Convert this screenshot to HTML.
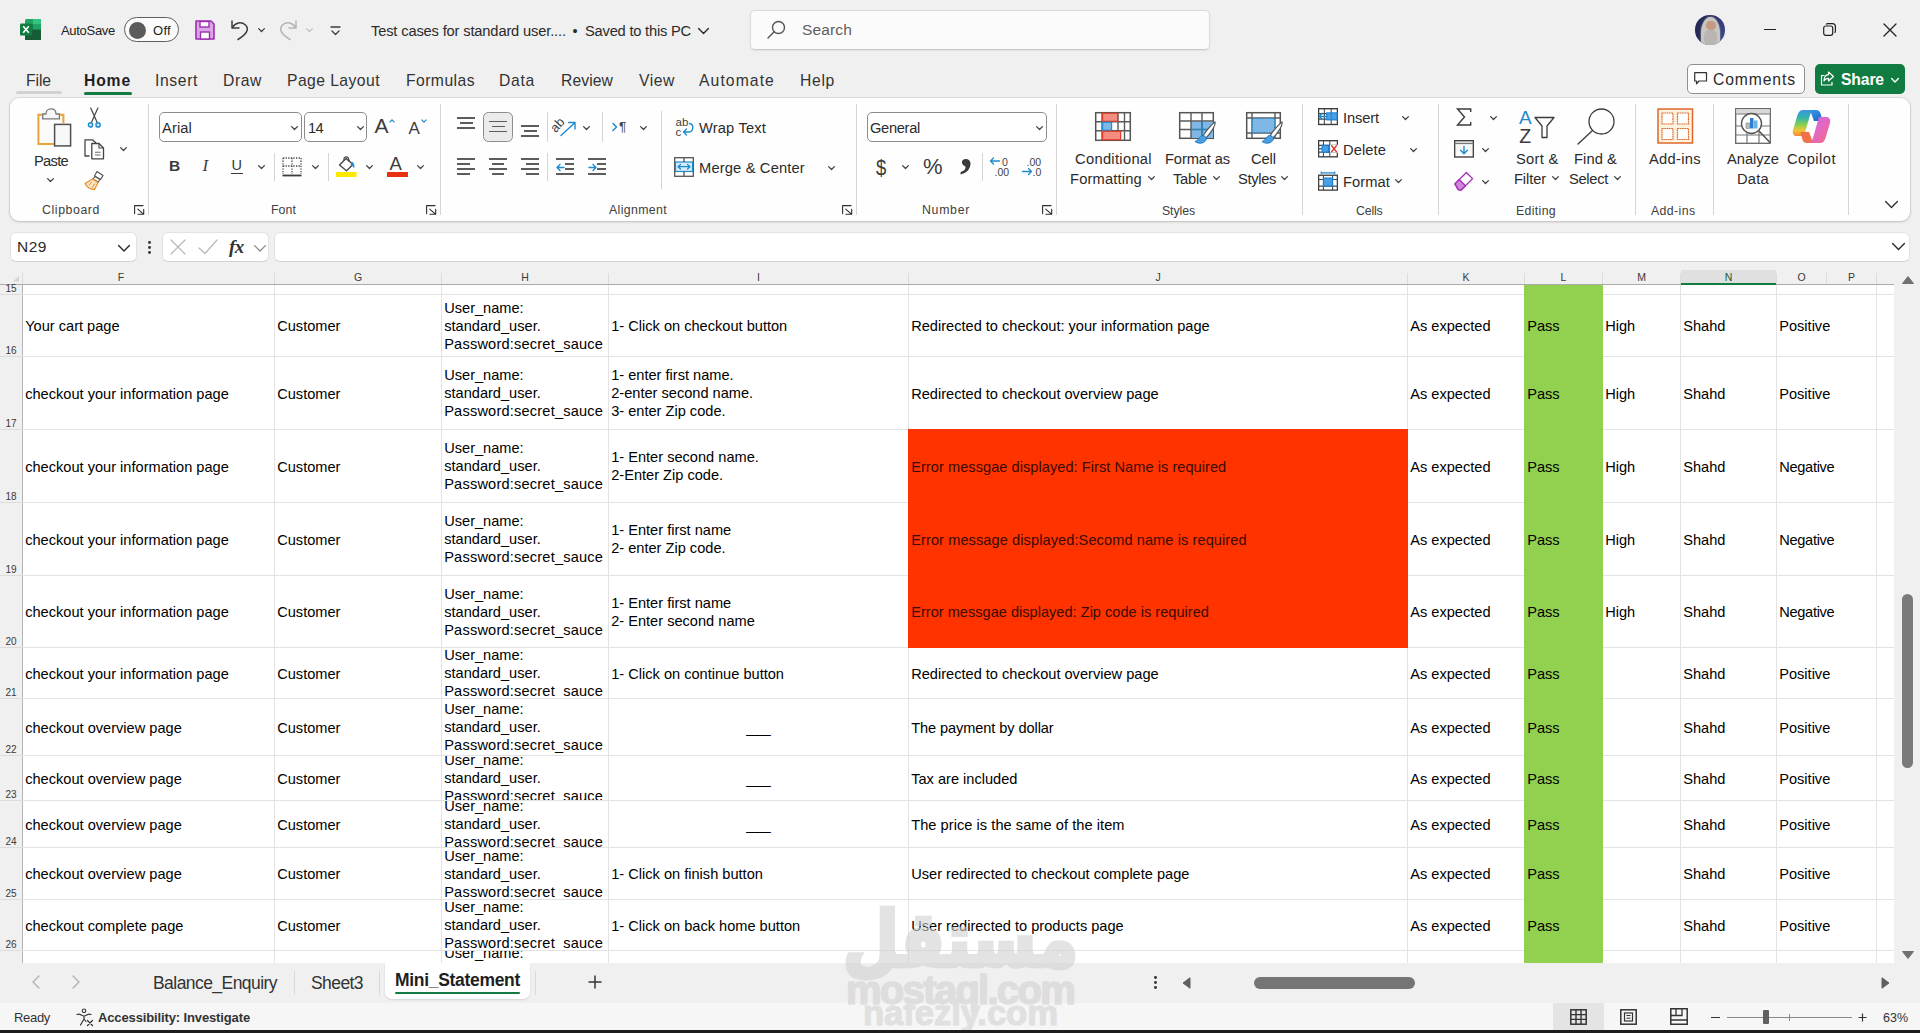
<!DOCTYPE html>
<html><head><meta charset="utf-8"><title>Excel</title>
<style>
*{box-sizing:border-box;margin:0;padding:0}
html,body{width:1920px;height:1033px;overflow:hidden}
body{background:#f0f0f0;font-family:"Liberation Sans",sans-serif;color:#222;position:relative}
.t{position:absolute;white-space:pre;display:block}
.a{position:absolute}
svg{position:absolute;overflow:visible}
#grid{position:absolute;left:0;top:285px;width:1894px;height:678px;background:#fff;overflow:hidden}
.c{position:absolute;overflow:hidden;display:flex;align-items:center;font-size:14.6px;line-height:18px;color:#000;white-space:pre;padding-left:2.2px}
.c>div{flex:none}
.hl{position:absolute;left:22px;width:1872px;height:1px;background:#e3e3e3}
.vl{position:absolute;top:0;width:1px;height:678px;background:#e3e3e3}
.rh{position:absolute;left:0;width:22px;font-size:10px;color:#3a3a3a;text-align:center;line-height:12px}
.ch{position:absolute;top:268px;height:16px;font-size:10.5px;color:#3a3a3a;text-align:center;line-height:18px}

</style></head>
<body>
<svg style="left:20px;top:19px" width="21" height="21" viewBox="0 0 21 21"><rect x="5" y="0" width="16" height="21" rx="1.5" fill="#21a366"/><rect x="13" y="0" width="8" height="5.3" fill="#33c481"/><rect x="5" y="5.3" width="8" height="5.3" fill="#107c41"/><rect x="13" y="5.3" width="8" height="5.3" fill="#21a366"/><rect x="5" y="10.6" width="16" height="10.4" fill="#185c37"/><rect x="0" y="4.5" width="12" height="12" rx="1.2" fill="#107c41"/><path d="M3.2 7.3L8.8 13.7M8.8 7.3L3.2 13.7" stroke="#fff" stroke-width="1.7"/></svg>
<span class="t " style="left:61.0px;top:20.8px;font-size:13px;line-height:20px;letter-spacing:-0.297px;">AutoSave</span>
<div class="a" style="left:124px;top:17px;width:55px;height:25px;border:1px solid #5e5e5e;border-radius:13px;background:#fbfbfb;"></div>
<div class="a" style="left:128.5px;top:21.5px;width:17px;height:17px;border-radius:50%;background:#5c5c5c;"></div>
<span class="t " style="left:153.0px;top:20.8px;font-size:13px;line-height:20px;letter-spacing:0.300px;">Off</span>
<svg style="left:195px;top:20px" width="20" height="20" viewBox="0 0 20 20"><path d="M1 1H16L19 4V19H1Z" fill="#dca6e6" stroke="#9b2fae" stroke-width="1.6" stroke-linejoin="round"/><rect x="5" y="1.5" width="9" height="5.5" fill="#fff" stroke="#9b2fae" stroke-width="1.4"/><rect x="5.5" y="12" width="9" height="7" fill="#fff" stroke="#9b2fae" stroke-width="1.4"/></svg>
<svg style="left:230px;top:19px" width="20" height="22" viewBox="0 0 20 22"><path d="M2 2V9H9" fill="none" stroke="#3b3b3b" stroke-width="1.5" stroke-linecap="round" stroke-linejoin="round"/><path d="M2.5 8.5C5 4 11 2 15.5 6C19.500 10 17 15 8 20.500" fill="none" stroke="#3b3b3b" stroke-width="1.5" stroke-linecap="round"/></svg>
<svg style="left:258.0px;top:28.2px" width="7.0" height="4.5"><path d="M0.6 0.6L3.50 3.50L6.40 0.6" fill="none" stroke="#444" stroke-width="1.3" stroke-linecap="round" stroke-linejoin="round"/></svg>
<svg style="left:278px;top:19px" width="20" height="22" viewBox="0 0 20 22"><path d="M18 2V9H11" fill="none" stroke="#b4b4b4" stroke-width="1.5" stroke-linecap="round" stroke-linejoin="round"/><path d="M17.500 8.5C15 4 9 2 4.500 6C0.500 10 3 15 12 20.500" fill="none" stroke="#b4b4b4" stroke-width="1.5" stroke-linecap="round"/></svg>
<svg style="left:306.0px;top:28.2px" width="7.0" height="4.5"><path d="M0.6 0.6L3.50 3.50L6.40 0.6" fill="none" stroke="#c0c0c0" stroke-width="1.3" stroke-linecap="round" stroke-linejoin="round"/></svg>
<svg style="left:329.5px;top:26px" width="11" height="10" viewBox="0 0 11 10"><path d="M1 1H10" stroke="#3b3b3b" stroke-width="1.3" stroke-linecap="round"/><path d="M2 5L5.500 8.500L9 5" fill="none" stroke="#3b3b3b" stroke-width="1.3" stroke-linecap="round" stroke-linejoin="round"/></svg>
<span class="t " style="left:371.0px;top:20.5px;font-size:14.7px;line-height:20px;letter-spacing:-0.162px;color:#2b2b2b;">Test cases for standard user....</span>
<span class="t " style="left:572.5px;top:20.5px;font-size:14.5px;line-height:20px;color:#2b2b2b;">•</span>
<span class="t " style="left:585.0px;top:20.5px;font-size:14.7px;line-height:20px;letter-spacing:-0.218px;color:#2b2b2b;">Saved to this PC</span>
<svg style="left:697.5px;top:27.8px" width="11.0" height="6.5"><path d="M0.6 0.6L5.50 5.50L10.40 0.6" fill="none" stroke="#2b2b2b" stroke-width="1.4" stroke-linecap="round" stroke-linejoin="round"/></svg>
<div class="a" style="left:750px;top:10px;width:460px;height:40px;background:#fbfbfb;border:1px solid #dadada;border-bottom-color:#c8c8c8;border-radius:5px;box-shadow:0 1px 2px rgba(0,0,0,.06);"></div>
<svg style="left:767px;top:20px" width="19" height="19" viewBox="0 0 19 19"><circle cx="11.500" cy="7.500" r="6" fill="none" stroke="#555" stroke-width="1.4"/><path d="M7.2 11.800L1 18" stroke="#555" stroke-width="1.4" stroke-linecap="round"/></svg>
<span class="t " style="left:802.0px;top:19.5px;font-size:15.5px;line-height:20px;letter-spacing:0.148px;color:#5f5f5f;">Search</span>
<div class="a" style="left:1695px;top:15px;width:29.5px;height:29.5px;border-radius:50%;background:linear-gradient(100deg,#23264f 0,#2c3166 55%,#3c4c8e 100%);overflow:hidden"><div class="a" style="left:6px;top:2px;width:19px;height:34px;border-radius:50% 50% 35% 35%;background:#c9c5c1;box-shadow:0 0 2px #c9c5c1"></div><div class="a" style="left:11px;top:6px;width:9.5px;height:9px;border-radius:45%;background:#c49a84"></div><div class="a" style="left:9px;top:15px;width:13px;height:16px;border-radius:40%;background:#b9b5b2"></div></div>
<div class="a" style="left:1764px;top:29px;width:12px;height:1.3px;background:#222;"></div>
<svg style="left:1823px;top:23px" width="13" height="13" viewBox="0 0 13 13"><rect x="0.700" y="3" width="9" height="9.300" rx="2" fill="none" stroke="#222" stroke-width="1.2"/><path d="M3.200 1.500C3.500 0.800 4.200 0.600 5 0.600H9.500C11.300 0.600 12.400 1.700 12.400 3.500V8C12.400 8.800 12.100 9.500 11.500 9.800" fill="none" stroke="#222" stroke-width="1.2"/></svg>
<svg style="left:1883px;top:23px" width="14" height="14" viewBox="0 0 14 14"><path d="M1 1L13 13M13 1L1 13" stroke="#222" stroke-width="1.3" stroke-linecap="round"/></svg>
<span class="t " style="left:26.0px;top:71.0px;font-size:15.7px;line-height:20px;letter-spacing:-0.075px;color:#333;">File</span>
<span class="t " style="left:84.0px;top:71.0px;font-size:15.7px;line-height:20px;letter-spacing:0.845px;font-weight:bold;color:#1f1f1f;">Home</span>
<span class="t " style="left:155.0px;top:71.0px;font-size:15.7px;line-height:20px;letter-spacing:0.622px;color:#333;">Insert</span>
<span class="t " style="left:223.0px;top:71.0px;font-size:15.7px;line-height:20px;letter-spacing:0.591px;color:#333;">Draw</span>
<span class="t " style="left:287.0px;top:71.0px;font-size:15.7px;line-height:20px;letter-spacing:0.439px;color:#333;">Page Layout</span>
<span class="t " style="left:406.0px;top:71.0px;font-size:15.7px;line-height:20px;letter-spacing:0.446px;color:#333;">Formulas</span>
<span class="t " style="left:499.0px;top:71.0px;font-size:15.7px;line-height:20px;letter-spacing:0.709px;color:#333;">Data</span>
<span class="t " style="left:561.0px;top:71.0px;font-size:15.7px;line-height:20px;letter-spacing:0.087px;color:#333;">Review</span>
<span class="t " style="left:639.0px;top:71.0px;font-size:15.7px;line-height:20px;letter-spacing:0.563px;color:#333;">View</span>
<span class="t " style="left:699.0px;top:71.0px;font-size:15.7px;line-height:20px;letter-spacing:1.100px;color:#333;">Automate</span>
<span class="t " style="left:800.0px;top:71.0px;font-size:15.7px;line-height:20px;letter-spacing:0.677px;color:#333;">Help</span>
<div class="a" style="left:16px;top:91px;width:46px;height:2.5px;background:#d2d2d2;border-radius:2px;"></div>
<div class="a" style="left:84px;top:91.5px;width:48px;height:3px;background:#107c41;border-radius:2px;"></div>
<div class="a" style="left:1687px;top:64px;width:118px;height:30px;background:#fdfdfd;border:1px solid #8f8f8f;border-radius:5px;"></div>
<svg style="left:1693px;top:71px" width="16" height="16" viewBox="0 0 16 16"><path d="M1.700 1.700H13.500V10H6L3.500 12.800V10H1.700Z" fill="none" stroke="#333" stroke-width="1.2" stroke-linejoin="round"/></svg>
<span class="t " style="left:1713.0px;top:70.0px;font-size:15.7px;line-height:20px;letter-spacing:0.887px;color:#2b2b2b;">Comments</span>
<div class="a" style="left:1815px;top:64px;width:90px;height:30px;background:#107c41;border-radius:5px;"></div>
<svg style="left:1819px;top:70px" width="16" height="17" viewBox="0 0 16 17"><path d="M5.500 5.500H2.500V15H13V12" fill="none" stroke="#fff" stroke-width="1.200" stroke-linejoin="round"/><path d="M9.500 2L14.500 6.500L9.500 11V8.300C7 8.300 5.700 9.500 5 11C5 7.500 6.500 5 9.500 4.700Z" fill="none" stroke="#fff" stroke-width="1.200" stroke-linejoin="round"/></svg>
<span class="t " style="left:1841.0px;top:69.8px;font-size:15.7px;line-height:20px;letter-spacing:-0.127px;font-weight:bold;color:#fff;">Share</span>
<svg style="left:1891.0px;top:77.5px" width="8.0" height="5.0"><path d="M0.6 0.6L4.00 4.00L7.40 0.6" fill="none" stroke="#fff" stroke-width="1.4" stroke-linecap="round" stroke-linejoin="round"/></svg>
<div class="a" style="left:10px;top:98px;width:1900px;height:123px;background:#fefefe;border-radius:9px;box-shadow:0 1px 3px rgba(0,0,0,.16),0 0 0 1px rgba(0,0,0,.07);"></div>
<div class="a" style="left:148px;top:104px;width:1px;height:111px;background:#d4d4d4;"></div>
<div class="a" style="left:440px;top:104px;width:1px;height:111px;background:#d4d4d4;"></div>
<div class="a" style="left:856px;top:104px;width:1px;height:111px;background:#d4d4d4;"></div>
<div class="a" style="left:1056px;top:104px;width:1px;height:111px;background:#d4d4d4;"></div>
<div class="a" style="left:1302px;top:104px;width:1px;height:111px;background:#d4d4d4;"></div>
<div class="a" style="left:1438px;top:104px;width:1px;height:111px;background:#d4d4d4;"></div>
<div class="a" style="left:1635px;top:104px;width:1px;height:111px;background:#d4d4d4;"></div>
<div class="a" style="left:1713px;top:104px;width:1px;height:111px;background:#d4d4d4;"></div>
<div class="a" style="left:1848px;top:104px;width:1px;height:111px;background:#d4d4d4;"></div>
<span class="t " style="left:42.0px;top:199.5px;font-size:12.3px;line-height:20px;letter-spacing:0.594px;color:#404040;">Clipboard</span>
<span class="t " style="left:271.0px;top:199.5px;font-size:12.3px;line-height:20px;letter-spacing:0.097px;color:#404040;">Font</span>
<span class="t " style="left:609.0px;top:199.5px;font-size:12.3px;line-height:20px;letter-spacing:0.367px;color:#404040;">Alignment</span>
<span class="t " style="left:922.0px;top:199.5px;font-size:12.3px;line-height:20px;letter-spacing:0.709px;color:#404040;">Number</span>
<span class="t " style="left:1162.0px;top:200.5px;font-size:12.3px;line-height:20px;letter-spacing:-0.083px;color:#404040;">Styles</span>
<span class="t " style="left:1356.0px;top:200.5px;font-size:12.3px;line-height:20px;letter-spacing:-0.168px;color:#404040;">Cells</span>
<span class="t " style="left:1516.0px;top:200.5px;font-size:12.3px;line-height:20px;letter-spacing:0.341px;color:#404040;">Editing</span>
<span class="t " style="left:1651.0px;top:200.5px;font-size:12.3px;line-height:20px;letter-spacing:0.399px;color:#404040;">Add-ins</span>
<svg style="left:134px;top:205px" width="11" height="11" viewBox="0 0 11 11"><path d="M0.600 8.600V0.600H9M3.800 4.100L9.500 9.200M4 9.300H9.700V4.300" fill="none" stroke="#2e2e2e" stroke-width="1.100" stroke-linecap="round" stroke-linejoin="round"/></svg>
<svg style="left:426px;top:205px" width="11" height="11" viewBox="0 0 11 11"><path d="M0.600 8.600V0.600H9M3.800 4.100L9.500 9.200M4 9.300H9.700V4.300" fill="none" stroke="#2e2e2e" stroke-width="1.100" stroke-linecap="round" stroke-linejoin="round"/></svg>
<svg style="left:842px;top:205px" width="11" height="11" viewBox="0 0 11 11"><path d="M0.600 8.600V0.600H9M3.800 4.100L9.500 9.200M4 9.300H9.700V4.300" fill="none" stroke="#2e2e2e" stroke-width="1.100" stroke-linecap="round" stroke-linejoin="round"/></svg>
<svg style="left:1042px;top:205px" width="11" height="11" viewBox="0 0 11 11"><path d="M0.600 8.600V0.600H9M3.800 4.100L9.500 9.200M4 9.300H9.700V4.300" fill="none" stroke="#2e2e2e" stroke-width="1.100" stroke-linecap="round" stroke-linejoin="round"/></svg>
<svg style="left:33.5px;top:107.5px" width="38" height="40" viewBox="0 0 38 40"><path d="M20 36H4.400V6.800H29.400V15" fill="#fafafa" stroke="#e8a33d" stroke-width="2" stroke-linejoin="miter"/><path d="M8.700 10.900V6H12C12 3 14 0.900 17 0.900C20 0.900 22 3 22 6H25.400V10.900Z" fill="#f6f6f6" stroke="#7a7a7a" stroke-width="1.300" stroke-linejoin="round"/><rect x="20.600" y="16.400" width="16" height="21.500" fill="#f8f8f8" stroke="#4f4f4f" stroke-width="1.500"/></svg>
<span class="t " style="left:34.0px;top:151.0px;font-size:14.7px;line-height:20px;letter-spacing:-0.718px;color:#2b2b2b;">Paste</span>
<svg style="left:47.0px;top:177.8px" width="7.0" height="4.5"><path d="M0.6 0.6L3.50 3.50L6.40 0.6" fill="none" stroke="#444" stroke-width="1.3" stroke-linecap="round" stroke-linejoin="round"/></svg>
<svg style="left:86.5px;top:106.5px" width="15" height="22" viewBox="0 0 15 22"><path d="M3.700 1L10.300 15.800M10.900 1L4.300 15.800" fill="none" stroke="#444" stroke-width="1.200" stroke-linecap="round"/><circle cx="3.500" cy="17.900" r="2.100" fill="#cfe6f7" stroke="#1e8bcd" stroke-width="1.400"/><circle cx="11.100" cy="17.900" r="2.100" fill="#cfe6f7" stroke="#1e8bcd" stroke-width="1.400"/></svg>
<svg style="left:84px;top:139px" width="21" height="21" viewBox="0 0 21 21"><path d="M5.500 17H1V0.800H8.500L12 4" fill="none" stroke="#444" stroke-width="1.300" stroke-linejoin="round"/><path d="M7.800 4.500H15L19.500 9V19.800H7.800Z" fill="#fff" stroke="#444" stroke-width="1.300" stroke-linejoin="round"/><path d="M15 4.500V9H19.500" fill="none" stroke="#444" stroke-width="1.100"/><path d="M11 13.300H16.500M11 16H16.500" stroke="#666" stroke-width="1.100"/></svg>
<svg style="left:120.0px;top:147.2px" width="7.0" height="4.5"><path d="M0.6 0.6L3.50 3.50L6.40 0.6" fill="none" stroke="#444" stroke-width="1.3" stroke-linecap="round" stroke-linejoin="round"/></svg>
<svg style="left:84px;top:170px" width="21" height="21" viewBox="0 0 21 21"><path d="M13 1.500L19 5.500L16.500 9.500L10.500 6Z" fill="#fff" stroke="#555" stroke-width="1.200" stroke-linejoin="round"/><path d="M11 6.500L16 9.500L14 12L9 9Z" fill="#fff" stroke="#555" stroke-width="1.100"/><path d="M8.500 9L1 13.500C3 17 7 19.500 10.500 19.500L14 12.500Z" fill="#fbe3c4" stroke="#e8912d" stroke-width="1.300" stroke-linejoin="round"/><path d="M5 15L8 12M8 17.500L11 13.500" stroke="#e8912d" stroke-width="1"/></svg>
<div class="a" style="left:159px;top:112px;width:143px;height:30px;background:#fff;border:1px solid #8d8d8d;border-radius:5px;"></div>
<span class="t " style="left:162.0px;top:117.5px;font-size:14.7px;line-height:20px;letter-spacing:0.118px;color:#2b2b2b;">Arial</span>
<svg style="left:290.5px;top:125.8px" width="7.0" height="4.5"><path d="M0.6 0.6L3.50 3.50L6.40 0.6" fill="none" stroke="#444" stroke-width="1.3" stroke-linecap="round" stroke-linejoin="round"/></svg>
<div class="a" style="left:304px;top:112px;width:62.8px;height:30px;background:#fff;border:1px solid #8d8d8d;border-radius:5px;"></div>
<span class="t " style="left:308.0px;top:117.5px;font-size:14.7px;line-height:20px;letter-spacing:-0.676px;color:#2b2b2b;">14</span>
<svg style="left:356.5px;top:125.8px" width="7.0" height="4.5"><path d="M0.6 0.6L3.50 3.50L6.40 0.6" fill="none" stroke="#444" stroke-width="1.3" stroke-linecap="round" stroke-linejoin="round"/></svg>
<span class="t " style="left:374.5px;top:115.5px;font-size:21px;line-height:20px;color:#3b3b3b;">A</span>
<svg style="left:389px;top:118.5px" width="6" height="4" viewBox="0 0 6 4"><path d="M0.600 3.400L3 0.800L5.400 3.400" fill="none" stroke="#1e8bcd" stroke-width="1.200"/></svg>
<span class="t " style="left:408.5px;top:118.5px;font-size:17px;line-height:20px;color:#3b3b3b;">A</span>
<svg style="left:420.5px;top:119px" width="6" height="4" viewBox="0 0 6 4"><path d="M0.600 0.600L3 3.200L5.400 0.600" fill="none" stroke="#1e8bcd" stroke-width="1.200"/></svg>
<span class="t " style="left:169.0px;top:155.5px;font-size:15.5px;line-height:20px;font-weight:bold;color:#3b3b3b;">B</span>
<span class="t" style="left:202.500px;top:156px;font-size:17px;line-height:20px;font-family:'Liberation Serif',serif;font-style:italic;color:#3b3b3b">I</span>
<span class="t " style="left:231.5px;top:154.5px;font-size:14.5px;line-height:20px;color:#3b3b3b;">U</span>
<div class="a" style="left:230.5px;top:173.2px;width:12.5px;height:1.3px;background:#3b3b3b;"></div>
<svg style="left:258.0px;top:165.2px" width="7.0" height="4.5"><path d="M0.6 0.6L3.50 3.50L6.40 0.6" fill="none" stroke="#444" stroke-width="1.3" stroke-linecap="round" stroke-linejoin="round"/></svg>
<div class="a" style="left:274px;top:153px;width:1px;height:28px;background:#d4d4d4;"></div>
<svg style="left:282px;top:157px" width="20" height="20" viewBox="0 0 20 20"><path d="M1 1H19M1 1V17M19 1V17M10 1V17M1 9H19" fill="none" stroke="#4a4a4a" stroke-width="1.300" stroke-dasharray="1.300 1.300"/><path d="M0.500 18.500H19.500" stroke="#3b3b3b" stroke-width="1.800"/></svg>
<svg style="left:312.0px;top:165.2px" width="7.0" height="4.5"><path d="M0.6 0.6L3.50 3.50L6.40 0.6" fill="none" stroke="#444" stroke-width="1.3" stroke-linecap="round" stroke-linejoin="round"/></svg>
<div class="a" style="left:328px;top:153px;width:1px;height:28px;background:#d4d4d4;"></div>
<svg style="left:336px;top:156px" width="21" height="22" viewBox="0 0 21 22"><path d="M10 2.500L17 8.500L10.500 14.800L3.500 9Z" fill="#fff" stroke="#444" stroke-width="1.300" stroke-linejoin="round"/><path d="M8 5V2.500C8 1 10.500 0.500 12 1.500L13.500 5.500" fill="none" stroke="#444" stroke-width="1.200"/><path d="M15.500 5.500C18 6.500 19 9.500 18.200 12.500C17 10.500 16.500 9.500 14.500 9.500Z" fill="#1e8bcd"/><rect x="0" y="16" width="20.500" height="5" fill="#ffe800"/></svg>
<svg style="left:366.0px;top:165.2px" width="7.0" height="4.5"><path d="M0.6 0.6L3.50 3.50L6.40 0.6" fill="none" stroke="#444" stroke-width="1.3" stroke-linecap="round" stroke-linejoin="round"/></svg>
<span class="t " style="left:389.5px;top:154.0px;font-size:18.5px;line-height:20px;color:#3b3b3b;">A</span>
<div class="a" style="left:387px;top:172px;width:20.5px;height:5px;background:#e8310f;"></div>
<svg style="left:417.0px;top:165.2px" width="7.0" height="4.5"><path d="M0.6 0.6L3.50 3.50L6.40 0.6" fill="none" stroke="#444" stroke-width="1.3" stroke-linecap="round" stroke-linejoin="round"/></svg>
<div class="a" style="left:457px;top:117.3px;width:18px;height:1.6px;background:#5c5c5c;"></div>
<div class="a" style="left:459.5px;top:122.3px;width:13.0px;height:1.6px;background:#5c5c5c;"></div>
<div class="a" style="left:457px;top:127.3px;width:18px;height:1.6px;background:#5c5c5c;"></div>
<div class="a" style="left:483px;top:112px;width:29.8px;height:30px;background:#ebebeb;border:1px solid #8d8d8d;border-radius:5.500px;"></div>
<div class="a" style="left:489px;top:120.5px;width:18px;height:1.6px;background:#5c5c5c;"></div>
<div class="a" style="left:491.5px;top:125.5px;width:13.0px;height:1.6px;background:#5c5c5c;"></div>
<div class="a" style="left:489px;top:130.5px;width:18px;height:1.6px;background:#5c5c5c;"></div>
<div class="a" style="left:521px;top:125.4px;width:18px;height:1.6px;background:#5c5c5c;"></div>
<div class="a" style="left:523.5px;top:130.39999999999998px;width:13.0px;height:1.6px;background:#5c5c5c;"></div>
<div class="a" style="left:521px;top:135.39999999999998px;width:18px;height:1.6px;background:#5c5c5c;"></div>
<div class="a" style="left:547px;top:112px;width:1px;height:30px;background:#d4d4d4;"></div>
<svg style="left:553px;top:116px" width="24" height="22" viewBox="0 0 24 22"><text x="0" y="13" font-size="13" font-family="Liberation Sans,sans-serif" fill="#3f3f3f" transform="rotate(-48 6 12)">ab</text><path d="M8 19.500L21.500 7M15.500 6.500H22V13" fill="none" stroke="#1e8bcd" stroke-width="1.400" stroke-linecap="round" stroke-linejoin="round"/></svg>
<svg style="left:582.5px;top:125.8px" width="7.0" height="4.5"><path d="M0.6 0.6L3.50 3.50L6.40 0.6" fill="none" stroke="#444" stroke-width="1.3" stroke-linecap="round" stroke-linejoin="round"/></svg>
<div class="a" style="left:602px;top:112px;width:1px;height:30px;background:#d4d4d4;"></div>
<svg style="left:612px;top:120px" width="8" height="14" viewBox="0 0 8 14"><path d="M1 3.500L4.500 7L1 10.500" fill="none" stroke="#1e8bcd" stroke-width="1.500" stroke-linecap="round" stroke-linejoin="round"/></svg>
<span class="t " style="left:619.0px;top:117.0px;font-size:13.5px;line-height:20px;color:#444;">¶</span>
<svg style="left:639.5px;top:125.8px" width="7.0" height="4.5"><path d="M0.6 0.6L3.50 3.50L6.40 0.6" fill="none" stroke="#444" stroke-width="1.3" stroke-linecap="round" stroke-linejoin="round"/></svg>
<div class="a" style="left:661px;top:111px;width:1px;height:78px;background:#d4d4d4;"></div>
<svg style="left:675px;top:117px" width="20" height="20" viewBox="0 0 20 20"><text x="0.500" y="8.500" font-size="11.500" font-family="Liberation Sans,sans-serif" fill="#3f3f3f">ab</text><text x="0.500" y="18.500" font-size="11.500" font-family="Liberation Sans,sans-serif" fill="#3f3f3f">c</text><path d="M14.500 6.500C19 7 19 15 13.500 15H9M11.500 12L8.500 15L11.500 18" fill="none" stroke="#1e8bcd" stroke-width="1.400" stroke-linecap="round" stroke-linejoin="round"/></svg>
<span class="t " style="left:699.0px;top:117.5px;font-size:14.7px;line-height:20px;letter-spacing:0.152px;color:#2b2b2b;">Wrap Text</span>
<div class="a" style="left:457px;top:158.1px;width:18px;height:1.6px;background:#5c5c5c;"></div>
<div class="a" style="left:457px;top:163.2px;width:13px;height:1.6px;background:#5c5c5c;"></div>
<div class="a" style="left:457px;top:168.29999999999998px;width:18px;height:1.6px;background:#5c5c5c;"></div>
<div class="a" style="left:457px;top:173.39999999999998px;width:13px;height:1.6px;background:#5c5c5c;"></div>
<div class="a" style="left:489px;top:158.1px;width:18px;height:1.6px;background:#5c5c5c;"></div>
<div class="a" style="left:492px;top:163.2px;width:12px;height:1.6px;background:#5c5c5c;"></div>
<div class="a" style="left:489px;top:168.29999999999998px;width:18px;height:1.6px;background:#5c5c5c;"></div>
<div class="a" style="left:492px;top:173.39999999999998px;width:12px;height:1.6px;background:#5c5c5c;"></div>
<div class="a" style="left:521px;top:158.1px;width:18px;height:1.6px;background:#5c5c5c;"></div>
<div class="a" style="left:526px;top:163.2px;width:13px;height:1.6px;background:#5c5c5c;"></div>
<div class="a" style="left:521px;top:168.29999999999998px;width:18px;height:1.6px;background:#5c5c5c;"></div>
<div class="a" style="left:526px;top:173.39999999999998px;width:13px;height:1.6px;background:#5c5c5c;"></div>
<div class="a" style="left:547px;top:153px;width:1px;height:28px;background:#d4d4d4;"></div>
<div class="a" style="left:556px;top:158.1px;width:18px;height:1.6px;background:#5c5c5c;"></div>
<div class="a" style="left:565px;top:163.2px;width:9px;height:1.6px;background:#5c5c5c;"></div>
<div class="a" style="left:565px;top:168.29999999999998px;width:9px;height:1.6px;background:#5c5c5c;"></div>
<div class="a" style="left:556px;top:173.39999999999998px;width:18px;height:1.6px;background:#5c5c5c;"></div>
<svg style="left:556px;top:162.5px" width="9" height="9" viewBox="0 0 9 9"><path d="M8 4.500H1M4 1.500L1 4.500L4 7.500" fill="none" stroke="#1e8bcd" stroke-width="1.400" stroke-linecap="round" stroke-linejoin="round"/></svg>
<div class="a" style="left:588px;top:158.1px;width:18px;height:1.6px;background:#5c5c5c;"></div>
<div class="a" style="left:597px;top:163.2px;width:9px;height:1.6px;background:#5c5c5c;"></div>
<div class="a" style="left:597px;top:168.29999999999998px;width:9px;height:1.6px;background:#5c5c5c;"></div>
<div class="a" style="left:588px;top:173.39999999999998px;width:18px;height:1.6px;background:#5c5c5c;"></div>
<svg style="left:588px;top:162.5px" width="9" height="9" viewBox="0 0 9 9"><path d="M1 4.500H8M5 1.500L8 4.500L5 7.500" fill="none" stroke="#1e8bcd" stroke-width="1.400" stroke-linecap="round" stroke-linejoin="round"/></svg>
<svg style="left:674px;top:157px" width="20" height="20" viewBox="0 0 20 20"><rect x="0.700" y="0.700" width="18.600" height="18.600" fill="#fff" stroke="#555" stroke-width="1.300"/><rect x="1.500" y="5" width="17" height="9.500" fill="#d6ecfa" stroke="#1e8bcd" stroke-width="1.200"/><path d="M10 0.700V5M10 14.500V19.300" stroke="#555" stroke-width="1.300"/><path d="M4 9.700H16M6.500 7.500L4 9.700L6.500 12M13.500 7.500L16 9.700L13.500 12" fill="none" stroke="#1e8bcd" stroke-width="1.200" stroke-linecap="round" stroke-linejoin="round"/></svg>
<span class="t " style="left:699.0px;top:157.5px;font-size:14.7px;line-height:20px;letter-spacing:0.160px;color:#2b2b2b;">Merge &amp; Center</span>
<svg style="left:827.5px;top:165.8px" width="7.0" height="4.5"><path d="M0.6 0.6L3.50 3.50L6.40 0.6" fill="none" stroke="#444" stroke-width="1.3" stroke-linecap="round" stroke-linejoin="round"/></svg>
<div class="a" style="left:867px;top:112px;width:180px;height:30px;background:#fff;border:1px solid #8d8d8d;border-radius:5px;"></div>
<span class="t " style="left:870.0px;top:117.5px;font-size:14.7px;line-height:20px;letter-spacing:-0.328px;color:#2b2b2b;">General</span>
<svg style="left:1035.5px;top:125.8px" width="7.0" height="4.5"><path d="M0.6 0.6L3.50 3.50L6.40 0.6" fill="none" stroke="#444" stroke-width="1.3" stroke-linecap="round" stroke-linejoin="round"/></svg>
<span class="t " style="left:876.0px;top:157.0px;font-size:21px;line-height:20px;color:#3b3b3b;transform:scale(.88,1.08);transform-origin:0 50%;">$</span>
<svg style="left:901.5px;top:165.2px" width="7.0" height="4.5"><path d="M0.6 0.6L3.50 3.50L6.40 0.6" fill="none" stroke="#444" stroke-width="1.3" stroke-linecap="round" stroke-linejoin="round"/></svg>
<span class="t " style="left:923.0px;top:157.0px;font-size:22px;line-height:20px;color:#3b3b3b;">%</span>
<span class="t" style="left:957.500px;top:150.300px;font-size:50px;line-height:50px;font-weight:bold;font-family:'Liberation Serif',serif;color:#3b3b3b">’</span>
<div class="a" style="left:982px;top:153px;width:1px;height:28px;background:#d4d4d4;"></div>
<svg style="left:989px;top:156px" width="22" height="22" viewBox="0 0 22 22"><path d="M10.500 5H1.500M4.500 2L1.500 5L4.500 8" fill="none" stroke="#1e8bcd" stroke-width="1.300" stroke-linecap="round" stroke-linejoin="round"/><text x="13" y="9.500" font-size="10.500" font-family="Liberation Sans,sans-serif" fill="#444">0</text><text x="5.500" y="20" font-size="10.500" font-family="Liberation Sans,sans-serif" fill="#444">.00</text></svg>
<svg style="left:1021px;top:156px" width="22" height="22" viewBox="0 0 22 22"><text x="5.500" y="9.500" font-size="10.500" font-family="Liberation Sans,sans-serif" fill="#444">.00</text><path d="M1.500 15.500H10.500M7.500 12.500L10.500 15.500L7.500 18.500" fill="none" stroke="#1e8bcd" stroke-width="1.300" stroke-linecap="round" stroke-linejoin="round"/><text x="11.500" y="20" font-size="10.500" font-family="Liberation Sans,sans-serif" fill="#444">.0</text></svg>
<svg style="left:1095px;top:112px" width="36" height="29" viewBox="0 0 36 29"><rect x="0.700" y="0.700" width="34.600" height="27.600" fill="#fff" stroke="#555" stroke-width="1.500"/><path d="M0.700 9.700H35.300M0.700 18.700H35.300M7 0.700V28.300M23 0.700V28.300M29.500 0.700V28.300" stroke="#5a5a5a" stroke-width="1.400"/><rect x="7.600" y="1.300" width="15" height="8" fill="#f28d80" stroke="#e23d2c" stroke-width="1.200"/><rect x="7.600" y="10.300" width="9" height="8" fill="#7fb8e6" stroke="#1e8bcd" stroke-width="1.200"/><rect x="7.600" y="19.300" width="18" height="8.400" fill="#f28d80" stroke="#e23d2c" stroke-width="1.200"/></svg>
<span class="t " style="left:1075.0px;top:149.0px;font-size:14.7px;line-height:20px;letter-spacing:0.313px;color:#2b2b2b;">Conditional</span>
<span class="t " style="left:1070.0px;top:169.0px;font-size:14.7px;line-height:20px;letter-spacing:0.174px;color:#2b2b2b;">Formatting</span>
<svg style="left:1147.8px;top:176.1px" width="7.0" height="4.5"><path d="M0.6 0.6L3.50 3.50L6.40 0.6" fill="none" stroke="#444" stroke-width="1.3" stroke-linecap="round" stroke-linejoin="round"/></svg>
<svg style="left:1179px;top:112px" width="38" height="34" viewBox="0 0 38 34"><rect x="0.700" y="0.700" width="33.600" height="25.600" fill="#fff" stroke="#555" stroke-width="1.500"/><rect x="12" y="9.500" width="22" height="16.500" fill="#7fb8e6"/><path d="M0.700 9H34.300M0.700 17.500H34.300M12 0.700V26.300M23 0.700V26.300" stroke="#5a5a5a" stroke-width="1.400"/><path d="M12 17.500H34M23 9V26" stroke="#1e8bcd" stroke-width="1.200"/><path d="M36 10C34 11 26 20 24 24L27 26C30 23 37 14 36 10Z" fill="#fff" stroke="#555" stroke-width="1.200"/><path d="M23.5 23.5C20 24 20.5 28 16 29.5C20 32.5 26.5 31.5 27.5 26.5C27 25 25.5 23.5 23.5 23.5Z" fill="#4a9fe0" stroke="#1e78c8" stroke-width="1"/></svg>
<span class="t " style="left:1165.0px;top:149.0px;font-size:14.7px;line-height:20px;letter-spacing:-0.130px;color:#2b2b2b;">Format as</span>
<span class="t " style="left:1173.0px;top:169.0px;font-size:14.7px;line-height:20px;letter-spacing:-0.229px;color:#2b2b2b;">Table</span>
<svg style="left:1212.5px;top:176.1px" width="7.0" height="4.5"><path d="M0.6 0.6L3.50 3.50L6.40 0.6" fill="none" stroke="#444" stroke-width="1.3" stroke-linecap="round" stroke-linejoin="round"/></svg>
<svg style="left:1246px;top:112px" width="38" height="34" viewBox="0 0 38 34"><rect x="0.700" y="0.700" width="33.600" height="25.600" fill="#fff" stroke="#555" stroke-width="1.500"/><path d="M0.700 6H34.300M0.700 21H34.300M6 0.700V26.300M29 0.700V26.300" stroke="#5a5a5a" stroke-width="1.400"/><rect x="6.500" y="6.500" width="22" height="14" fill="#7fb8e6" stroke="#1e8bcd" stroke-width="1.200" stroke-dasharray="1.500 1"/><path d="M36 10C34 11 26 20 24 24L27 26C30 23 37 14 36 10Z" fill="#fff" stroke="#555" stroke-width="1.200"/><path d="M23.5 23.5C20 24 20.5 28 16 29.5C20 32.5 26.5 31.5 27.5 26.5C27 25 25.5 23.5 23.5 23.5Z" fill="#4a9fe0" stroke="#1e78c8" stroke-width="1"/></svg>
<span class="t " style="left:1251.0px;top:149.0px;font-size:14.7px;line-height:20px;letter-spacing:-0.081px;color:#2b2b2b;">Cell</span>
<span class="t " style="left:1238.0px;top:169.0px;font-size:14.7px;line-height:20px;letter-spacing:-0.339px;color:#2b2b2b;">Styles</span>
<svg style="left:1280.5px;top:176.1px" width="7.0" height="4.5"><path d="M0.6 0.6L3.50 3.50L6.40 0.6" fill="none" stroke="#444" stroke-width="1.3" stroke-linecap="round" stroke-linejoin="round"/></svg>
<svg style="left:1318px;top:108.3px" width="20" height="17.2" viewBox="0 0 22 17" preserveAspectRatio="none"><rect x="0.700" y="0.700" width="20.600" height="15.600" fill="#fff" stroke="#3f3f3f" stroke-width="1.400"/><path d="M0.700 5.500H21.300M0.700 11H21.300M7 0.700V16.300M14.500 0.700V16.300" stroke="#4a4a4a" stroke-width="1.200"/><rect x="9.500" y="4.800" width="11.500" height="7" fill="#4aa0e6" stroke="#1a7fd0" stroke-width="1"/><path d="M14.500 5V11.500" stroke="#1a7fd0" stroke-width="1"/><path d="M10 8.300H1.500M4.500 5.300L1.500 8.300L4.500 11.300" fill="none" stroke="#1e8bcd" stroke-width="1.500" stroke-linecap="round" stroke-linejoin="round"/></svg>
<span class="t " style="left:1343.0px;top:107.5px;font-size:14.7px;line-height:20px;letter-spacing:-0.127px;color:#2b2b2b;">Insert</span>
<svg style="left:1401.5px;top:115.8px" width="7.0" height="4.5"><path d="M0.6 0.6L3.50 3.50L6.40 0.6" fill="none" stroke="#444" stroke-width="1.3" stroke-linecap="round" stroke-linejoin="round"/></svg>
<svg style="left:1318px;top:140.1px" width="20" height="17.5" viewBox="0 0 22 18" preserveAspectRatio="none"><rect x="0.700" y="0.700" width="20.600" height="16.600" fill="#fff" stroke="#3f3f3f" stroke-width="1.400"/><path d="M0.700 5.500H21.300M0.700 12.500H21.300M6 0.700V17.300M13 0.700V17.300" stroke="#4a4a4a" stroke-width="1.200"/><rect x="13.200" y="5" width="8.800" height="8" fill="#fff"/><rect x="4.500" y="5.500" width="7" height="7" fill="#4aa0e6" stroke="#1a7fd0" stroke-width="1.200"/><path d="M1 9H4.500M11.500 9H13.500" stroke="#1a7fd0" stroke-width="1.300"/><path d="M15 6L20.300 12M20.300 6L15 12" stroke="#e0362c" stroke-width="1.500" stroke-linecap="round"/></svg>
<span class="t " style="left:1343.0px;top:139.5px;font-size:14.7px;line-height:20px;letter-spacing:0.084px;color:#2b2b2b;">Delete</span>
<svg style="left:1409.5px;top:147.8px" width="7.0" height="4.5"><path d="M0.6 0.6L3.50 3.50L6.40 0.6" fill="none" stroke="#444" stroke-width="1.3" stroke-linecap="round" stroke-linejoin="round"/></svg>
<svg style="left:1318px;top:171px" width="20" height="19.8" viewBox="0 0 22 21" preserveAspectRatio="none"><path d="M3.500 0.500V3.500M18.500 0.500V3.500M3.500 2H18.500" stroke="#1e8bcd" stroke-width="1.200"/><rect x="0.700" y="4.500" width="20.600" height="15.800" fill="#fff" stroke="#3f3f3f" stroke-width="1.400"/><path d="M0.700 9H21.300M0.700 16H21.300M6 4.500V20.300M16 4.500V20.300" stroke="#4a4a4a" stroke-width="1.200"/><rect x="6" y="7.500" width="10" height="8.500" fill="#4aa0e6" stroke="#1a7fd0" stroke-width="1.200"/></svg>
<span class="t " style="left:1343.0px;top:171.5px;font-size:14.7px;line-height:20px;letter-spacing:0.074px;color:#2b2b2b;">Format</span>
<svg style="left:1394.5px;top:179.2px" width="7.0" height="4.5"><path d="M0.6 0.6L3.50 3.50L6.40 0.6" fill="none" stroke="#444" stroke-width="1.3" stroke-linecap="round" stroke-linejoin="round"/></svg>
<svg style="left:1456px;top:108px" width="16" height="18" viewBox="0 0 16 18"><path d="M14.700 4V1H1.500L8.500 9L1.500 17H14.700V14" fill="none" stroke="#3b3b3b" stroke-width="1.400" stroke-linejoin="miter"/></svg>
<svg style="left:1489.5px;top:115.8px" width="7.0" height="4.5"><path d="M0.6 0.6L3.50 3.50L6.40 0.6" fill="none" stroke="#444" stroke-width="1.3" stroke-linecap="round" stroke-linejoin="round"/></svg>
<svg style="left:1454px;top:140px" width="20" height="17.7" viewBox="0 0 21 18" preserveAspectRatio="none"><rect x="0.700" y="0.700" width="19.600" height="16.600" fill="#fafafa" stroke="#3f3f3f" stroke-width="1.400"/><path d="M0.700 3.500H20.300" stroke="#777" stroke-width="1.400"/><path d="M10.500 6.500V14M7 10.500L10.500 14L14 10.500" fill="none" stroke="#1e8bcd" stroke-width="1.500" stroke-linecap="round" stroke-linejoin="round"/></svg>
<svg style="left:1481.5px;top:147.8px" width="7.0" height="4.5"><path d="M0.6 0.6L3.50 3.50L6.40 0.6" fill="none" stroke="#444" stroke-width="1.3" stroke-linecap="round" stroke-linejoin="round"/></svg>
<svg style="left:1454px;top:171px" width="20" height="20" viewBox="0 0 21 21" preserveAspectRatio="none"><path d="M1 13.500L13 1.500L19.500 8L7.500 20L4.500 19.500Z" fill="#fff" stroke="#a32fb5" stroke-width="1.400" stroke-linejoin="round"/><path d="M1 13.500L5.500 9L12 15.500L7.500 20L4.500 19.500Z" fill="#cf86dc" stroke="#a32fb5" stroke-width="1.400" stroke-linejoin="round"/></svg>
<svg style="left:1481.5px;top:179.8px" width="7.0" height="4.5"><path d="M0.6 0.6L3.50 3.50L6.40 0.6" fill="none" stroke="#444" stroke-width="1.3" stroke-linecap="round" stroke-linejoin="round"/></svg>
<svg style="left:1518px;top:108px" width="38" height="36" viewBox="0 0 38 36"><text x="1" y="15.500" font-size="19" font-family="Liberation Sans,sans-serif" fill="#1e8bcd">A</text><text x="1.200" y="35" font-size="19.500" font-family="Liberation Sans,sans-serif" fill="#3b3b3b">Z</text><path d="M17 9.500H36L29 18V29.500H24V18Z" fill="none" stroke="#3b3b3b" stroke-width="1.300" stroke-linejoin="round"/></svg>
<span class="t " style="left:1516.0px;top:149.0px;font-size:14.7px;line-height:20px;letter-spacing:0.275px;color:#2b2b2b;">Sort &amp;</span>
<span class="t " style="left:1514.0px;top:169.0px;font-size:14.7px;line-height:20px;letter-spacing:-0.111px;color:#2b2b2b;">Filter</span>
<svg style="left:1552.0px;top:176.1px" width="7.0" height="4.5"><path d="M0.6 0.6L3.50 3.50L6.40 0.6" fill="none" stroke="#444" stroke-width="1.3" stroke-linecap="round" stroke-linejoin="round"/></svg>
<svg style="left:1577px;top:108px" width="38" height="37" viewBox="0 0 38 37"><circle cx="24.500" cy="13.500" r="12.500" fill="none" stroke="#3b3b3b" stroke-width="1.300"/><path d="M15.500 22.500L1 36" stroke="#3b3b3b" stroke-width="1.300" stroke-linecap="round"/></svg>
<span class="t " style="left:1574.0px;top:149.0px;font-size:14.7px;line-height:20px;letter-spacing:0.086px;color:#2b2b2b;">Find &amp;</span>
<span class="t " style="left:1569.0px;top:169.0px;font-size:14.7px;line-height:20px;letter-spacing:-0.309px;color:#2b2b2b;">Select</span>
<svg style="left:1614.0px;top:176.1px" width="7.0" height="4.5"><path d="M0.6 0.6L3.50 3.50L6.40 0.6" fill="none" stroke="#444" stroke-width="1.3" stroke-linecap="round" stroke-linejoin="round"/></svg>
<svg style="left:1657px;top:108px" width="37" height="36" viewBox="0 0 37 36"><rect x="1" y="1" width="34.500" height="34" fill="#fdf3e0" stroke="#e0672a" stroke-width="1.500"/><g fill="#fff" stroke="#e0702f" stroke-width="1.200" stroke-dasharray="1.800 0.500"><rect x="5" y="5" width="11" height="11"/><rect x="20.500" y="5" width="11" height="11"/><rect x="5" y="20.500" width="11" height="11"/><rect x="20.500" y="20.500" width="11" height="11"/></g></svg>
<span class="t " style="left:1649.0px;top:149.0px;font-size:14.7px;line-height:20px;letter-spacing:0.308px;color:#2b2b2b;">Add-ins</span>
<svg style="left:1735px;top:108px" width="37" height="37" viewBox="0 0 37 37"><rect x="0.700" y="0.700" width="34.600" height="34.600" fill="#fff" stroke="#666" stroke-width="1.300"/><rect x="1.300" y="1.300" width="33.400" height="4.500" fill="#d8d8d8"/><path d="M0.700 6H35.300M0.700 18H35.300M0.700 27H35.300M12 18V35.300M24 18V35.300" stroke="#777" stroke-width="1.200"/><circle cx="16.500" cy="15.500" r="10" fill="#fff" stroke="#555" stroke-width="1.400"/><path d="M24 23L35 34.500" stroke="#555" stroke-width="1.600"/><rect x="11" y="15" width="3.500" height="5.500" fill="#bbb" stroke="#888" stroke-width=".6"/><rect x="15" y="10" width="3.500" height="10.500" fill="#2f7fd0"/><rect x="19" y="12.500" width="3.500" height="8" fill="#69b3ea"/></svg>
<span class="t " style="left:1727.0px;top:149.0px;font-size:14.7px;line-height:20px;letter-spacing:-0.043px;color:#2b2b2b;">Analyze</span>
<span class="t " style="left:1737.0px;top:169.0px;font-size:14.7px;line-height:20px;letter-spacing:0.237px;color:#2b2b2b;">Data</span>
<svg style="left:1792px;top:108px" width="39" height="37" viewBox="0 0 39 37"><defs><linearGradient id="cg1" x1="0" y1="0" x2="1" y2="1"><stop offset="0" stop-color="#3b93e6"/><stop offset=".5" stop-color="#2f86dc"/><stop offset="1" stop-color="#1660c0"/></linearGradient><linearGradient id="cg2" x1="0" y1="0" x2="0" y2="1"><stop offset="0" stop-color="#3b93e6"/><stop offset=".3" stop-color="#35b5a8"/><stop offset=".55" stop-color="#7fcf55"/><stop offset=".78" stop-color="#efc634"/><stop offset="1" stop-color="#f08a35"/></linearGradient><linearGradient id="cg3" x1="0" y1="0" x2="1" y2="1"><stop offset="0" stop-color="#b96bf0"/><stop offset=".5" stop-color="#e568c0"/><stop offset="1" stop-color="#f2677a"/></linearGradient></defs><path d="M11 2H24C27 2 28.500 4 29 7L30.500 13H22L19 5C18.500 3.500 17 3 15.500 3Z" fill="url(#cg1)"/><path d="M11 2C8 2 6.500 4 5.500 7L1 22C0 26 2 28 5 28H12L17.500 9C18.500 5 19.500 3 22 2.500Z" fill="url(#cg2)"/><path d="M28 35H15C12 35 10.500 33 10 30L8.500 24H17L20 32C20.500 33.500 22 34 23.500 34Z" fill="#f07048"/><path d="M28 35C31 35 32.500 33 33.500 30L38 15C39 11 37 9 34 9H27L21.500 28C20.500 32 19.500 34 17 34.500Z" fill="url(#cg3)"/></svg>
<span class="t " style="left:1787.0px;top:149.0px;font-size:14.7px;line-height:20px;letter-spacing:0.463px;color:#2b2b2b;">Copilot</span>
<svg style="left:1885.0px;top:201.2px" width="13.0" height="7.5"><path d="M0.6 0.6L6.50 6.50L12.40 0.6" fill="none" stroke="#333" stroke-width="1.4" stroke-linecap="round" stroke-linejoin="round"/></svg>
<div class="a" style="left:0;top:268px;width:1894px;height:17px;border-bottom:1px solid #ababab"></div>
<div class="ch" style="left:101.0px;width:40px;">F</div>
<div class="a" style="left:274px;top:273px;width:1px;height:11px;background:#dcdcdc"></div>
<div class="ch" style="left:338.0px;width:40px;">G</div>
<div class="a" style="left:441px;top:273px;width:1px;height:11px;background:#dcdcdc"></div>
<div class="ch" style="left:505.0px;width:40px;">H</div>
<div class="a" style="left:608px;top:273px;width:1px;height:11px;background:#dcdcdc"></div>
<div class="ch" style="left:738.5px;width:40px;">I</div>
<div class="a" style="left:908px;top:273px;width:1px;height:11px;background:#dcdcdc"></div>
<div class="ch" style="left:1138.0px;width:40px;">J</div>
<div class="a" style="left:1407px;top:273px;width:1px;height:11px;background:#dcdcdc"></div>
<div class="ch" style="left:1446.0px;width:40px;">K</div>
<div class="a" style="left:1524px;top:273px;width:1px;height:11px;background:#dcdcdc"></div>
<div class="ch" style="left:1543.5px;width:40px;">L</div>
<div class="a" style="left:1602px;top:273px;width:1px;height:11px;background:#dcdcdc"></div>
<div class="ch" style="left:1621.5px;width:40px;">M</div>
<div class="a" style="left:1680px;top:273px;width:1px;height:11px;background:#dcdcdc"></div>
<div class="a" style="left:1681px;top:270px;width:95px;height:15px;background:#e0e0e0;border-bottom:2px solid #107c41"></div>
<div class="ch" style="left:1708.5px;width:40px;color:#185c37;">N</div>
<div class="a" style="left:1776px;top:273px;width:1px;height:11px;background:#dcdcdc"></div>
<div class="ch" style="left:1781.5px;width:40px;">O</div>
<div class="a" style="left:1826px;top:273px;width:1px;height:11px;background:#dcdcdc"></div>
<div class="ch" style="left:1831.5px;width:40px;">P</div>
<div class="a" style="left:1876px;top:273px;width:1px;height:11px;background:#dcdcdc"></div>
<div class="a" style="left:22px;top:273px;width:1px;height:11px;background:#dcdcdc"></div>
<svg style="left:13px;top:275.5px" width="6" height="6"><path d="M6 0V5.500H0Z" fill="#d4d4d4"/></svg>
<div id="grid">
<div class="a" style="left:0;top:0;width:23px;height:678px;background:#f0f0f0;border-right:1px solid #b4b4b4"></div>
<div class="a" style="left:1524px;top:0;width:79px;height:678px;background:#92d050"></div>
<div class="hl" style="top:9px"></div>
<div class="hl" style="top:71px"></div>
<div class="hl" style="top:144px"></div>
<div class="hl" style="top:217px"></div>
<div class="hl" style="top:290px"></div>
<div class="hl" style="top:362px"></div>
<div class="hl" style="top:413px"></div>
<div class="hl" style="top:470px"></div>
<div class="hl" style="top:515px"></div>
<div class="hl" style="top:562px"></div>
<div class="hl" style="top:614px"></div>
<div class="hl" style="top:665px"></div>
<div class="vl" style="left:274px"></div>
<div class="vl" style="left:441px"></div>
<div class="vl" style="left:608px"></div>
<div class="vl" style="left:908px"></div>
<div class="vl" style="left:1407px"></div>
<div class="vl" style="left:1524px"></div>
<div class="vl" style="left:1602px"></div>
<div class="vl" style="left:1680px"></div>
<div class="vl" style="left:1776px"></div>
<div class="vl" style="left:1876px"></div>
<div class="vl" style="left:1894px"></div>
<div class="a" style="left:1524px;top:0;width:79px;height:678px;background:#92d050"></div>
<div class="a" style="left:908px;top:144px;width:500px;height:219px;background:#ff3300"></div>
<div class="a" style="left:0;top:9px;width:22px;height:1px;background:#dcdcdc"></div>
<div class="rh" style="top:60px">16</div>
<div class="a" style="left:0;top:71px;width:22px;height:1px;background:#dcdcdc"></div>
<div class="rh" style="top:133px">17</div>
<div class="a" style="left:0;top:144px;width:22px;height:1px;background:#dcdcdc"></div>
<div class="rh" style="top:206px">18</div>
<div class="a" style="left:0;top:217px;width:22px;height:1px;background:#dcdcdc"></div>
<div class="rh" style="top:279px">19</div>
<div class="a" style="left:0;top:290px;width:22px;height:1px;background:#dcdcdc"></div>
<div class="rh" style="top:351px">20</div>
<div class="a" style="left:0;top:362px;width:22px;height:1px;background:#dcdcdc"></div>
<div class="rh" style="top:402px">21</div>
<div class="a" style="left:0;top:413px;width:22px;height:1px;background:#dcdcdc"></div>
<div class="rh" style="top:459px">22</div>
<div class="a" style="left:0;top:470px;width:22px;height:1px;background:#dcdcdc"></div>
<div class="rh" style="top:504px">23</div>
<div class="a" style="left:0;top:515px;width:22px;height:1px;background:#dcdcdc"></div>
<div class="rh" style="top:551px">24</div>
<div class="a" style="left:0;top:562px;width:22px;height:1px;background:#dcdcdc"></div>
<div class="rh" style="top:603px">25</div>
<div class="a" style="left:0;top:614px;width:22px;height:1px;background:#dcdcdc"></div>
<div class="rh" style="top:654px">26</div>
<div class="a" style="left:0;top:665px;width:22px;height:1px;background:#dcdcdc"></div>
<div class="c" style="left:23px;top:10px;width:251px;height:61px;"><div style="position:relative;top:.6px;">Your cart page</div></div>
<div class="c" style="left:275px;top:10px;width:166px;height:61px;"><div style="position:relative;top:.6px;">Customer</div></div>
<div class="c" style="left:442px;top:10px;width:166px;height:61px;"><div>User_name:
standard_user.
<span style="letter-spacing:.19px">Password:secret_sauce</span></div></div>
<div class="c" style="left:609px;top:10px;width:299px;height:61px;"><div style="position:relative;top:.6px;">1- Click on checkout button</div></div>
<div class="c" style="left:909px;top:10px;width:498px;height:61px;"><div style="position:relative;top:.6px;">Redirected to checkout: your information page</div></div>
<div class="c" style="left:1408px;top:10px;width:116px;height:61px;"><div style="position:relative;top:.6px;">As expected</div></div>
<div class="c" style="left:1525px;top:10px;width:77px;height:61px;"><div style="position:relative;top:.6px;">Pass</div></div>
<div class="c" style="left:1603px;top:10px;width:77px;height:61px;"><div style="position:relative;top:.6px;">High</div></div>
<div class="c" style="left:1681px;top:10px;width:95px;height:61px;"><div style="position:relative;top:.6px;">Shahd</div></div>
<div class="c" style="left:1777px;top:10px;width:99px;height:61px;"><div style="position:relative;top:.6px;">Positive</div></div>
<div class="c" style="left:23px;top:72px;width:251px;height:72px;"><div style="position:relative;top:.6px;">checkout your information page</div></div>
<div class="c" style="left:275px;top:72px;width:166px;height:72px;"><div style="position:relative;top:.6px;">Customer</div></div>
<div class="c" style="left:442px;top:72px;width:166px;height:72px;"><div>User_name:
standard_user.
<span style="letter-spacing:.19px">Password:secret_sauce</span></div></div>
<div class="c" style="left:609px;top:72px;width:299px;height:72px;"><div>1- enter first name.
2-enter second name.
3- enter Zip code.</div></div>
<div class="c" style="left:909px;top:72px;width:498px;height:72px;"><div style="position:relative;top:.6px;">Redirected to checkout overview page</div></div>
<div class="c" style="left:1408px;top:72px;width:116px;height:72px;"><div style="position:relative;top:.6px;">As expected</div></div>
<div class="c" style="left:1525px;top:72px;width:77px;height:72px;"><div style="position:relative;top:.6px;">Pass</div></div>
<div class="c" style="left:1603px;top:72px;width:77px;height:72px;"><div style="position:relative;top:.6px;">High</div></div>
<div class="c" style="left:1681px;top:72px;width:95px;height:72px;"><div style="position:relative;top:.6px;">Shahd</div></div>
<div class="c" style="left:1777px;top:72px;width:99px;height:72px;"><div style="position:relative;top:.6px;">Positive</div></div>
<div class="c" style="left:23px;top:145px;width:251px;height:72px;"><div style="position:relative;top:.6px;">checkout your information page</div></div>
<div class="c" style="left:275px;top:145px;width:166px;height:72px;"><div style="position:relative;top:.6px;">Customer</div></div>
<div class="c" style="left:442px;top:145px;width:166px;height:72px;"><div>User_name:
standard_user.
<span style="letter-spacing:.19px">Password:secret_sauce</span></div></div>
<div class="c" style="left:609px;top:145px;width:299px;height:72px;"><div>1- Enter second name.
2-Enter Zip code.</div></div>
<div class="c" style="left:909px;top:145px;width:498px;height:72px;color:#3a0b00;"><div style="position:relative;top:.6px;letter-spacing:0.043px;">Error messgae displayed: First Name is required</div></div>
<div class="c" style="left:1408px;top:145px;width:116px;height:72px;"><div style="position:relative;top:.6px;">As expected</div></div>
<div class="c" style="left:1525px;top:145px;width:77px;height:72px;"><div style="position:relative;top:.6px;">Pass</div></div>
<div class="c" style="left:1603px;top:145px;width:77px;height:72px;"><div style="position:relative;top:.6px;">High</div></div>
<div class="c" style="left:1681px;top:145px;width:95px;height:72px;"><div style="position:relative;top:.6px;">Shahd</div></div>
<div class="c" style="left:1777px;top:145px;width:99px;height:72px;"><div style="position:relative;top:.6px;letter-spacing:-0.3px;">Negative</div></div>
<div class="c" style="left:23px;top:218px;width:251px;height:72px;"><div style="position:relative;top:.6px;">checkout your information page</div></div>
<div class="c" style="left:275px;top:218px;width:166px;height:72px;"><div style="position:relative;top:.6px;">Customer</div></div>
<div class="c" style="left:442px;top:218px;width:166px;height:72px;"><div>User_name:
standard_user.
<span style="letter-spacing:.19px">Password:secret_sauce</span></div></div>
<div class="c" style="left:609px;top:218px;width:299px;height:72px;"><div>1- Enter first name
2- enter Zip code.</div></div>
<div class="c" style="left:909px;top:218px;width:498px;height:72px;color:#3a0b00;"><div style="position:relative;top:.6px;letter-spacing:0.08px;">Error message displayed:Secomd name is required</div></div>
<div class="c" style="left:1408px;top:218px;width:116px;height:72px;"><div style="position:relative;top:.6px;">As expected</div></div>
<div class="c" style="left:1525px;top:218px;width:77px;height:72px;"><div style="position:relative;top:.6px;">Pass</div></div>
<div class="c" style="left:1603px;top:218px;width:77px;height:72px;"><div style="position:relative;top:.6px;">High</div></div>
<div class="c" style="left:1681px;top:218px;width:95px;height:72px;"><div style="position:relative;top:.6px;">Shahd</div></div>
<div class="c" style="left:1777px;top:218px;width:99px;height:72px;"><div style="position:relative;top:.6px;letter-spacing:-0.3px;">Negative</div></div>
<div class="c" style="left:23px;top:291px;width:251px;height:71px;"><div style="position:relative;top:.6px;">checkout your information page</div></div>
<div class="c" style="left:275px;top:291px;width:166px;height:71px;"><div style="position:relative;top:.6px;">Customer</div></div>
<div class="c" style="left:442px;top:291px;width:166px;height:71px;"><div>User_name:
standard_user.
<span style="letter-spacing:.19px">Password:secret_sauce</span></div></div>
<div class="c" style="left:609px;top:291px;width:299px;height:71px;"><div>1- Enter first name
2- Enter second name</div></div>
<div class="c" style="left:909px;top:291px;width:498px;height:71px;color:#3a0b00;"><div style="position:relative;top:.6px;">Error messgae displayed: Zip code is required</div></div>
<div class="c" style="left:1408px;top:291px;width:116px;height:71px;"><div style="position:relative;top:.6px;">As expected</div></div>
<div class="c" style="left:1525px;top:291px;width:77px;height:71px;"><div style="position:relative;top:.6px;">Pass</div></div>
<div class="c" style="left:1603px;top:291px;width:77px;height:71px;"><div style="position:relative;top:.6px;">High</div></div>
<div class="c" style="left:1681px;top:291px;width:95px;height:71px;"><div style="position:relative;top:.6px;">Shahd</div></div>
<div class="c" style="left:1777px;top:291px;width:99px;height:71px;"><div style="position:relative;top:.6px;letter-spacing:-0.3px;">Negative</div></div>
<div class="c" style="left:23px;top:363px;width:251px;height:50px;"><div style="position:relative;top:.6px;">checkout your information page</div></div>
<div class="c" style="left:275px;top:363px;width:166px;height:50px;"><div style="position:relative;top:.6px;">Customer</div></div>
<div class="c" style="left:442px;top:363px;width:166px;height:50px;"><div>User_name:
standard_user.
<span style="letter-spacing:.19px">Password:secret_sauce</span></div></div>
<div class="c" style="left:609px;top:363px;width:299px;height:50px;"><div style="position:relative;top:.6px;">1- Click on continue button</div></div>
<div class="c" style="left:909px;top:363px;width:498px;height:50px;"><div style="position:relative;top:.6px;">Redirected to checkout overview page</div></div>
<div class="c" style="left:1408px;top:363px;width:116px;height:50px;"><div style="position:relative;top:.6px;">As expected</div></div>
<div class="c" style="left:1525px;top:363px;width:77px;height:50px;"><div style="position:relative;top:.6px;">Pass</div></div>
<div class="c" style="left:1681px;top:363px;width:95px;height:50px;"><div style="position:relative;top:.6px;">Shahd</div></div>
<div class="c" style="left:1777px;top:363px;width:99px;height:50px;"><div style="position:relative;top:.6px;">Positive</div></div>
<div class="c" style="left:23px;top:414px;width:251px;height:56px;"><div style="position:relative;top:.6px;">checkout overview page</div></div>
<div class="c" style="left:275px;top:414px;width:166px;height:56px;"><div style="position:relative;top:.6px;">Customer</div></div>
<div class="c" style="left:442px;top:414px;width:166px;height:56px;"><div>User_name:
standard_user.
<span style="letter-spacing:.19px">Password:secret_sauce</span></div></div>
<div class="c" style="left:609px;top:414px;width:299px;height:56px;justify-content:center;padding-left:0;"><div style="position:relative;top:.6px;">___</div></div>
<div class="c" style="left:909px;top:414px;width:498px;height:56px;"><div style="position:relative;top:.6px;letter-spacing:-0.095px;">The payment by dollar</div></div>
<div class="c" style="left:1408px;top:414px;width:116px;height:56px;"><div style="position:relative;top:.6px;">As expected</div></div>
<div class="c" style="left:1525px;top:414px;width:77px;height:56px;"><div style="position:relative;top:.6px;">Pass</div></div>
<div class="c" style="left:1681px;top:414px;width:95px;height:56px;"><div style="position:relative;top:.6px;">Shahd</div></div>
<div class="c" style="left:1777px;top:414px;width:99px;height:56px;"><div style="position:relative;top:.6px;">Positive</div></div>
<div class="c" style="left:23px;top:471px;width:251px;height:44px;"><div style="position:relative;top:.6px;">checkout overview page</div></div>
<div class="c" style="left:275px;top:471px;width:166px;height:44px;"><div style="position:relative;top:.6px;">Customer</div></div>
<div class="c" style="left:442px;top:471px;width:166px;height:44px;"><div>User_name:
standard_user.
<span style="letter-spacing:.19px">Password:secret_sauce</span></div></div>
<div class="c" style="left:609px;top:471px;width:299px;height:44px;justify-content:center;padding-left:0;"><div style="position:relative;top:.6px;">___</div></div>
<div class="c" style="left:909px;top:471px;width:498px;height:44px;"><div style="position:relative;top:.6px;">Tax are included</div></div>
<div class="c" style="left:1408px;top:471px;width:116px;height:44px;"><div style="position:relative;top:.6px;">As expected</div></div>
<div class="c" style="left:1525px;top:471px;width:77px;height:44px;"><div style="position:relative;top:.6px;">Pass</div></div>
<div class="c" style="left:1681px;top:471px;width:95px;height:44px;"><div style="position:relative;top:.6px;">Shahd</div></div>
<div class="c" style="left:1777px;top:471px;width:99px;height:44px;"><div style="position:relative;top:.6px;">Positive</div></div>
<div class="c" style="left:23px;top:516px;width:251px;height:46px;"><div style="position:relative;top:.6px;">checkout overview page</div></div>
<div class="c" style="left:275px;top:516px;width:166px;height:46px;"><div style="position:relative;top:.6px;">Customer</div></div>
<div class="c" style="left:442px;top:516px;width:166px;height:46px;"><div>User_name:
standard_user.
<span style="letter-spacing:.19px">Password:secret_sauce</span></div></div>
<div class="c" style="left:609px;top:516px;width:299px;height:46px;justify-content:center;padding-left:0;"><div style="position:relative;top:.6px;">___</div></div>
<div class="c" style="left:909px;top:516px;width:498px;height:46px;"><div style="position:relative;top:.6px;letter-spacing:0.05px;">The price is the same of the item</div></div>
<div class="c" style="left:1408px;top:516px;width:116px;height:46px;"><div style="position:relative;top:.6px;">As expected</div></div>
<div class="c" style="left:1525px;top:516px;width:77px;height:46px;"><div style="position:relative;top:.6px;">Pass</div></div>
<div class="c" style="left:1681px;top:516px;width:95px;height:46px;"><div style="position:relative;top:.6px;">Shahd</div></div>
<div class="c" style="left:1777px;top:516px;width:99px;height:46px;"><div style="position:relative;top:.6px;">Positive</div></div>
<div class="c" style="left:23px;top:563px;width:251px;height:51px;"><div style="position:relative;top:.6px;">checkout overview page</div></div>
<div class="c" style="left:275px;top:563px;width:166px;height:51px;"><div style="position:relative;top:.6px;">Customer</div></div>
<div class="c" style="left:442px;top:563px;width:166px;height:51px;"><div>User_name:
standard_user.
<span style="letter-spacing:.19px">Password:secret_sauce</span></div></div>
<div class="c" style="left:609px;top:563px;width:299px;height:51px;"><div style="position:relative;top:.6px;">1- Click on finish button</div></div>
<div class="c" style="left:909px;top:563px;width:498px;height:51px;"><div style="position:relative;top:.6px;">User redirected to checkout complete page</div></div>
<div class="c" style="left:1408px;top:563px;width:116px;height:51px;"><div style="position:relative;top:.6px;">As expected</div></div>
<div class="c" style="left:1525px;top:563px;width:77px;height:51px;"><div style="position:relative;top:.6px;">Pass</div></div>
<div class="c" style="left:1681px;top:563px;width:95px;height:51px;"><div style="position:relative;top:.6px;">Shahd</div></div>
<div class="c" style="left:1777px;top:563px;width:99px;height:51px;"><div style="position:relative;top:.6px;">Positive</div></div>
<div class="c" style="left:23px;top:615px;width:251px;height:50px;"><div style="position:relative;top:.6px;">checkout complete page</div></div>
<div class="c" style="left:275px;top:615px;width:166px;height:50px;"><div style="position:relative;top:.6px;">Customer</div></div>
<div class="c" style="left:442px;top:615px;width:166px;height:50px;"><div>User_name:
standard_user.
<span style="letter-spacing:.19px">Password:secret_sauce</span></div></div>
<div class="c" style="left:609px;top:615px;width:299px;height:50px;"><div style="position:relative;top:.6px;">1- Click on back home button</div></div>
<div class="c" style="left:909px;top:615px;width:498px;height:50px;"><div style="position:relative;top:.6px;">User redirected to products page</div></div>
<div class="c" style="left:1408px;top:615px;width:116px;height:50px;"><div style="position:relative;top:.6px;">As expected</div></div>
<div class="c" style="left:1525px;top:615px;width:77px;height:50px;"><div style="position:relative;top:.6px;">Pass</div></div>
<div class="c" style="left:1681px;top:615px;width:95px;height:50px;"><div style="position:relative;top:.6px;">Shahd</div></div>
<div class="c" style="left:1777px;top:615px;width:99px;height:50px;"><div style="position:relative;top:.6px;">Positive</div></div>
<div class="c" style="left:442px;top:666px;width:166px;height:39px;"><div>User_name:
standard_user.
<span style="letter-spacing:.19px">Password:secret_sauce</span></div></div>
</div>
<div class="rh" style="top:282.6px">15</div>
<div class="a" style="left:10px;top:232px;width:127px;height:30px;background:#fff;border:1px solid #e3e3e3;border-bottom-color:#d2d2d2;border-radius:6px;"></div>
<span class="t " style="left:17.0px;top:237.0px;font-size:15.5px;line-height:20px;letter-spacing:0.522px;color:#2b2b2b;">N29</span>
<svg style="left:117.5px;top:245.0px" width="12.0" height="7.0"><path d="M0.6 0.6L6.00 6.00L11.40 0.6" fill="none" stroke="#2b2b2b" stroke-width="1.4" stroke-linecap="round" stroke-linejoin="round"/></svg>
<div class="a" style="left:147.8px;top:241.1px;width:2.8px;height:2.8px;background:#3a3a3a;border-radius:50%;"></div>
<div class="a" style="left:147.8px;top:246.1px;width:2.8px;height:2.8px;background:#3a3a3a;border-radius:50%;"></div>
<div class="a" style="left:147.8px;top:251.1px;width:2.8px;height:2.8px;background:#3a3a3a;border-radius:50%;"></div>
<div class="a" style="left:162px;top:232px;width:107px;height:30px;background:#fff;border:1px solid #e3e3e3;border-bottom-color:#d2d2d2;border-radius:6px;"></div>
<svg style="left:170px;top:239px" width="16" height="16" viewBox="0 0 16 16"><path d="M1 1L15 15M15 1L1 15" stroke="#b9b9b9" stroke-width="1.300" stroke-linecap="round"/></svg>
<svg style="left:198px;top:239px" width="20" height="16" viewBox="0 0 20 16"><path d="M1 9L7 14.500L19 1" fill="none" stroke="#b9b9b9" stroke-width="1.300" stroke-linecap="round" stroke-linejoin="round"/></svg>
<span class="t" style="left:229px;top:235.500px;font-size:19px;line-height:22px;font-family:'Liberation Serif',serif;font-style:italic;font-weight:bold;color:#333;letter-spacing:-0.500px">fx</span>
<svg style="left:254.0px;top:244.5px" width="12.0" height="7.0"><path d="M0.6 0.6L6.00 6.00L11.40 0.6" fill="none" stroke="#8a8a8a" stroke-width="1.3" stroke-linecap="round" stroke-linejoin="round"/></svg>
<div class="a" style="left:274px;top:232px;width:1636px;height:30px;background:#fff;border:1px solid #e3e3e3;border-bottom-color:#d2d2d2;border-radius:6px;"></div>
<svg style="left:1892.0px;top:243.2px" width="13.0" height="7.5"><path d="M0.6 0.6L6.50 6.50L12.40 0.6" fill="none" stroke="#2b2b2b" stroke-width="1.4" stroke-linecap="round" stroke-linejoin="round"/></svg>
<svg style="left:1902px;top:276px" width="12" height="8" viewBox="0 0 12 8"><path d="M6 0.500L11.500 7.500H0.500Z" fill="#707070" stroke="#707070" stroke-linejoin="round" stroke-width="1"/></svg>
<svg style="left:1902px;top:951px" width="12" height="8" viewBox="0 0 12 8"><path d="M6 7.500L11.500 0.500H0.500Z" fill="#707070" stroke="#707070" stroke-linejoin="round" stroke-width="1"/></svg>
<div class="a" style="left:1901.5px;top:594px;width:11.5px;height:174px;background:#7a7a7a;border-radius:6px;"></div>
<div class="a" style="left:0px;top:963px;width:1920px;height:40px;background:#f0f0f0;"></div>
<svg style="left:31px;top:975px" width="10" height="14" viewBox="0 0 10 14"><path d="M8 1L2 7L8 13" fill="none" stroke="#b0b0b0" stroke-width="1.400" stroke-linecap="round" stroke-linejoin="round"/></svg>
<svg style="left:71px;top:975px" width="10" height="14" viewBox="0 0 10 14"><path d="M2 1L8 7L2 13" fill="none" stroke="#b0b0b0" stroke-width="1.400" stroke-linecap="round" stroke-linejoin="round"/></svg>
<span class="t " style="left:153.0px;top:973.0px;font-size:17.5px;line-height:20px;letter-spacing:-0.554px;color:#333;">Balance_Enquiry</span>
<span class="t " style="left:311.0px;top:973.0px;font-size:17.5px;line-height:20px;letter-spacing:-0.578px;color:#333;">Sheet3</span>
<div class="a" style="left:294px;top:971px;width:1px;height:24px;background:#d9d9d9;"></div>
<div class="a" style="left:379px;top:971px;width:1px;height:24px;background:#d9d9d9;"></div>
<div class="a" style="left:535px;top:971px;width:1px;height:24px;background:#d9d9d9;"></div>
<div class="a" style="left:385px;top:963px;width:145px;height:35.5px;background:#fff;border-radius:0 0 7px 7px;box-shadow:0 1px 2px rgba(0,0,0,.12);"></div>
<span class="t " style="left:395.0px;top:969.5px;font-size:17.5px;line-height:20px;letter-spacing:-0.309px;font-weight:bold;color:#1f1f1f;">Mini_Statement</span>
<div class="a" style="left:395px;top:992px;width:125px;height:2.2px;background:#107c41;border-radius:1px;"></div>
<svg style="left:588px;top:975px" width="14" height="14" viewBox="0 0 14 14"><path d="M7 0.500V13.500M0.500 7H13.500" stroke="#333" stroke-width="1.500"/></svg>
<div class="a" style="left:1154.2px;top:976.1px;width:2.8px;height:2.8px;background:#3a3a3a;border-radius:50%;"></div>
<div class="a" style="left:1154.2px;top:981.1px;width:2.8px;height:2.8px;background:#3a3a3a;border-radius:50%;"></div>
<div class="a" style="left:1154.2px;top:986.1px;width:2.8px;height:2.8px;background:#3a3a3a;border-radius:50%;"></div>
<svg style="left:1182px;top:977px" width="9" height="12" viewBox="0 0 9 12"><path d="M8 0.800V11.200L1 6Z" fill="#606060" stroke="#606060" stroke-linejoin="round" stroke-width="1"/></svg>
<svg style="left:1881px;top:977px" width="9" height="12" viewBox="0 0 9 12"><path d="M1 0.800V11.200L8 6Z" fill="#606060" stroke="#606060" stroke-linejoin="round" stroke-width="1"/></svg>
<div class="a" style="left:1254px;top:977px;width:161px;height:11.5px;background:#757575;border-radius:6px;"></div>
<div class="a" style="left:0px;top:1003px;width:1920px;height:27px;background:#f6f6f6;"></div>
<span class="t " style="left:14.0px;top:1007.5px;font-size:13px;line-height:20px;letter-spacing:-0.316px;color:#333;">Ready</span>
<svg style="left:76px;top:1008px" width="18" height="18" viewBox="0 0 18 18"><circle cx="8" cy="2.800" r="1.800" fill="none" stroke="#333" stroke-width="1.100"/><path d="M1 6.500C4 5 5.500 8 8 8C10.500 8 12 5 15 6.500M8 8V11L4.500 17M8 11L10 13.500" fill="none" stroke="#333" stroke-width="1.200" stroke-linecap="round" stroke-linejoin="round"/><path d="M11.500 12.500L16.500 17.500M16.500 12.500L11.500 17.500" stroke="#333" stroke-width="1.200" stroke-linecap="round"/></svg>
<span class="t " style="left:98.0px;top:1007.5px;font-size:13px;line-height:20px;letter-spacing:-0.129px;font-weight:bold;color:#333;">Accessibility: Investigate</span>
<div class="a" style="left:1553px;top:1003px;width:51px;height:27px;background:#e4e4e4;"></div>
<svg style="left:1570px;top:1009px" width="17" height="16" viewBox="0 0 17 16"><rect x="0.800" y="0.800" width="15.400" height="14.400" fill="none" stroke="#333" stroke-width="1.500"/><path d="M0.800 5.600H16.200M0.800 10.400H16.200M6 0.800V15.200M11 0.800V15.200" stroke="#333" stroke-width="1.400"/></svg>
<svg style="left:1620px;top:1009px" width="17" height="16" viewBox="0 0 17 16"><rect x="0.800" y="0.800" width="15.400" height="14.400" fill="none" stroke="#333" stroke-width="1.500"/><rect x="4.500" y="4" width="8" height="8" fill="none" stroke="#333" stroke-width="1.200"/><path d="M6.500 6.500H10.500M6.500 9.200H10.500" stroke="#333" stroke-width="1"/></svg>
<svg style="left:1670px;top:1008px" width="18" height="17" viewBox="0 0 18 17"><path d="M0.800 0.800H17.200V12H0.800Z" fill="none" stroke="#333" stroke-width="1.500"/><path d="M0.800 12V16.200H17.200V12" fill="none" stroke="#333" stroke-width="1.500"/><path d="M6 0.800V7.500H0.800M6 7.500H12V0.800" fill="none" stroke="#333" stroke-width="1.300"/></svg>
<div class="a" style="left:1711px;top:1017px;width:9px;height:1.2px;background:#333;"></div>
<div class="a" style="left:1727px;top:1017.3px;width:125px;height:1px;background:#8a8a8a;"></div>
<div class="a" style="left:1763px;top:1010px;width:5.5px;height:14px;background:#606060;border-radius:1px;"></div>
<div class="a" style="left:1788.5px;top:1014px;width:1px;height:7px;background:#8a8a8a;"></div>
<svg style="left:1858px;top:1013px" width="9" height="9" viewBox="0 0 9 9"><path d="M4.500 0.500V8.500M0.500 4.500H8.500" stroke="#333" stroke-width="1.200"/></svg>
<span class="t " style="left:1883.0px;top:1007.5px;font-size:12.5px;line-height:20px;letter-spacing:-0.006px;color:#333;">63%</span>
<div class="a" style="left:0;top:0;width:1920px;height:1033px;opacity:.6;pointer-events:none">
<span class="t" style="left:842.6px;top:892.7px;font-family:'DejaVu Sans',sans-serif;font-weight:bold;font-size:80px;line-height:100px;color:#d2d2d2;-webkit-text-stroke:5px #d2d2d2;direction:rtl;transform:scale(.803,.948);transform-origin:0 0">مستقل</span>
<span class="t " style="left:846.0px;top:-10.0px;font-size:40px;line-height:20px;letter-spacing:-1.702px;font-weight:bold;color:#d2d2d2;line-height:40px;top:969.8px;-webkit-text-stroke:1.5px #d2d2d2;">mostaql.com</span>
<span class="t " style="left:863.0px;top:-10.0px;font-size:34.7px;line-height:20px;letter-spacing:-0.096px;font-weight:bold;color:#d2d2d2;line-height:36px;top:995px;-webkit-text-stroke:1.2px #d2d2d2;">nafezly.com</span>
</div>
<div class="a" style="left:0px;top:1030px;width:1920px;height:3px;background:#1c1c1c;"></div>
</body></html>
